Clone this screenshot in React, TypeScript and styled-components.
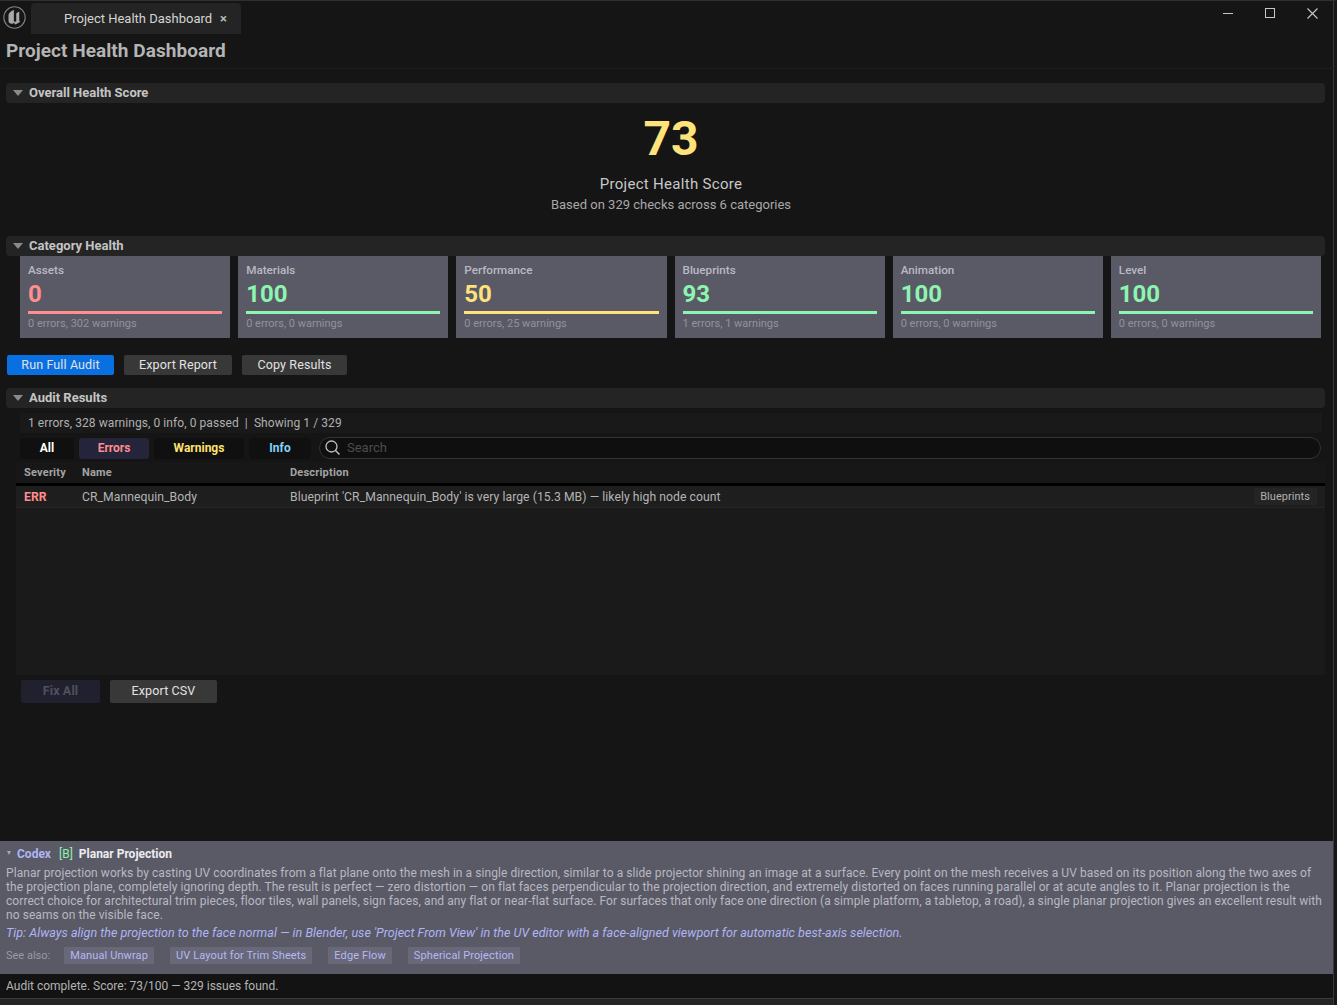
import React from 'react';
import styled, { createGlobalStyle } from 'styled-components';

const GlobalStyle = createGlobalStyle`
  html, body {
    margin: 0;
    padding: 0;
    background: #151515;
  }
  * {
    box-sizing: border-box;
  }
`;

const Window = styled.div`
  position: relative;
  width: 1337px;
  height: 1005px;
  display: flex;
  flex-direction: column;
  overflow: hidden;
  background: #151515;
  border-top: 1px solid #303030;
  border-right: 3px solid #161616;
  box-shadow: inset -1px 0 0 #383838;
  font-family: Roboto, "Liberation Sans", sans-serif;
  color: #c0c0c0;
`;

const ResizeGrip = styled.div`
  position: absolute;
  top: 613px;
  right: -3px;
  width: 1px;
  height: 10px;
  background: #8a8a8a;
`;

const TitleBar = styled.div`
  height: 33px;
  flex: none;
  display: flex;
  align-items: flex-end;
  padding-left: 3px;
`;

const Logo = styled.svg`
  width: 23px;
  height: 23px;
  margin: 0 5px 5px 0;
`;

const Tab = styled.div`
  width: 210px;
  height: 31px;
  background: #242424;
  border-radius: 4px 4px 0 0;
  display: flex;
  align-items: center;
  padding-left: 33px;
  font-size: 13px;
  color: #d4d4d4;
`;

const TabClose = styled.span`
  margin-left: 8px;
  font-size: 13px;
  font-weight: 700;
  color: #b8b8b8;
`;

const WindowButtons = styled.div`
  margin-left: auto;
  align-self: flex-start;
  display: flex;
  align-items: center;
  gap: 32px;
  padding: 6px 16px 0 0;
`;

const PageTitle = styled.div`
  height: 35px;
  flex: none;
  padding: 6px 6px 0;
  font-size: 19px;
  line-height: 22px;
  letter-spacing: 0.05px;
  font-weight: 700;
  color: #b4b4b4;
  border-bottom: 1px solid #1e1e1e;
`;

const SectionHeader = styled.div<{ $top: number }>`
  height: 20px;
  flex: none;
  margin: ${p => p.$top}px 9px 0 6px;
  padding: 0 0 2px 7px;
  background: #242424;
  border-radius: 4px;
  display: flex;
  align-items: center;
  gap: 6px;
  font-size: 13px;
  font-weight: 700;
  color: #c4c4c4;
`;

const Caret = styled.span`
  width: 0;
  height: 0;
  margin-top: 2px;
  border-left: 5px solid transparent;
  border-right: 5px solid transparent;
  border-top: 6px solid #8a8a8a;
`;

const ScoreBlock = styled.div`
  height: 133px;
  flex: none;
  display: flex;
  flex-direction: column;
  align-items: center;
  padding: 8px 0 0 8px;
`;

const ScoreValue = styled.div`
  font-size: 48px;
  line-height: 56px;
  font-weight: 700;
  color: #ffe27a;
`;

const ScoreLabel = styled.div`
  margin-top: 8px;
  font-size: 15px;
  line-height: 18px;
  letter-spacing: 0.3px;
  color: #c8c8c8;
`;

const ScoreSub = styled.div`
  margin-top: 4px;
  font-size: 13px;
  line-height: 16px;
  color: #a8a8a8;
`;

const CardRow = styled.div`
  height: 82px;
  flex: none;
  margin: 0 13px 0 20px;
  display: grid;
  grid-template-columns: repeat(6, 1fr);
  gap: 8px;
`;

const Card = styled.div`
  background: #5a5a66;
  padding: 7px 8px 0;
  display: flex;
  flex-direction: column;
`;

const CardName = styled.div`
  font-size: 11.7px;
  line-height: 14px;
  font-weight: 500;
  color: #b9b9c4;
`;

const CardScore = styled.div<{ $color: string }>`
  margin-top: 3px;
  font-size: 24px;
  line-height: 28px;
  font-weight: 700;
  color: ${p => p.$color};
`;

const CardBar = styled.div<{ $color: string }>`
  height: 3px;
  margin-top: 3px;
  background: ${p => p.$color};
`;

const CardNote = styled.div`
  margin-top: 3px;
  font-size: 11px;
  line-height: 13px;
  color: #92929c;
`;

const ButtonRow = styled.div<{ $top: number; $left: number }>`
  flex: none;
  display: flex;
  gap: 10px;
  margin: ${p => p.$top}px 0 0 ${p => p.$left}px;
`;

const Button = styled.div<{ $variant?: 'primary' | 'disabled'; $width: number; $tall?: boolean }>`
  height: ${p => p.$tall ? 23 : 20}px;
  width: ${p => p.$width}px;
  padding-bottom: 2px;
  border-radius: 2px;
  display: flex;
  align-items: center;
  justify-content: center;
  font-size: 12.5px;
  letter-spacing: 0.12px;
  color: ${p => p.$variant === 'disabled' ? '#50505e' : '#e2e2e2'};
  font-weight: ${p => p.$variant === 'disabled' ? 700 : 400};
  background: ${p => p.$variant === 'primary' ? '#0870e0' : p.$variant === 'disabled' ? '#20202e' : '#383838'};
`;

const StatsLine = styled.div`
  height: 20px;
  flex: none;
  margin: 5px 12px 0 20px;
  padding: 0 0 1px 8px;
  background: #191919;
  display: flex;
  align-items: center;
  font-size: 12px;
  letter-spacing: 0.07px;
  color: #b0b0b0;
  white-space: pre;
`;

const FilterRow = styled.div`
  height: 22px;
  flex: none;
  margin: 4px 13px 0 20px;
  display: flex;
  align-items: center;
`;

const FilterChip = styled.div<{ $width: number; $color: string; $active?: boolean }>`
  width: ${p => p.$width}px;
  height: 21px;
  margin-right: 5px;
  border-radius: 3px;
  background: ${p => p.$active ? '#24243a' : '#101010'};
  color: ${p => p.$color};
  display: flex;
  align-items: center;
  justify-content: center;
  font-size: 12px;
  font-weight: 700;
`;

const SearchBox = styled.div`
  flex: 1;
  height: 22px;
  margin-left: 3px;
  padding: 0 0 1px 4px;
  border: 1px solid #333;
  border-radius: 11px;
  background: #0f0f0f;
  display: flex;
  align-items: center;
  gap: 6px;
  font-size: 13px;
  color: #4c4c4c;
`;

const Table = styled.div`
  height: 213px;
  flex: none;
  margin: 3px 9px 0 16px;
  background: #1a1a1a;
  display: flex;
  flex-direction: column;
`;

const TableHead = styled.div`
  height: 24px;
  flex: none;
  background: #171717;
  border-bottom: 3px solid #000;
  display: grid;
  grid-template-columns: 58px 208px 1fr;
  align-items: center;
  padding-left: 8px;
  font-size: 11px;
  letter-spacing: 0.2px;
  font-weight: 700;
  color: #a4a4a4;
`;

const TableRow = styled.div`
  height: 22px;
  flex: none;
  background: #1e1e1e;
  border-bottom: 1px solid #242424;
  display: grid;
  grid-template-columns: 58px 208px 1fr auto;
  align-items: center;
  padding: 0 8px;
  font-size: 12.2px;
  letter-spacing: 0.05px;
  color: #b4b4b4;
`;

const Severity = styled.span`
  font-weight: 700;
  color: #ff8d8d;
`;

const CategoryTag = styled.span`
  height: 17px;
  padding: 0 7px 0 6px;
  background: #242424;
  display: flex;
  align-items: center;
  font-size: 11px;
  color: #b0b0b0;
`;

const Spacer = styled.div`
  flex: 1;
`;

const Codex = styled.div`
  height: 133px;
  flex: none;
  margin-right: 1px;
  background: #5a5a66;
  padding: 4px 9px 0 6px;
`;

const CodexTitle = styled.div`
  display: flex;
  align-items: center;
  height: 17px;
  font-size: 12px;
  font-weight: 700;
`;

const CodexCaret = styled.span`
  width: 0;
  height: 0;
  margin: 0 6px 2px 1px;
  border-left: 2.5px solid transparent;
  border-right: 2.5px solid transparent;
  border-top: 4px solid #a8a8b4;
`;

const CodexName = styled.span`
  color: #b0b4f4;
  margin-right: 8px;
`;

const CodexLevel = styled.span`
  color: #8cf0ac;
  font-weight: 400;
  margin-right: 6px;
`;

const CodexHeading = styled.span`
  color: #ececf0;
`;

const CodexBody = styled.div`
  margin-top: 4px;
  font-size: 12px;
  line-height: 14px;
  letter-spacing: 0.07px;
  color: #b8b8c2;
`;

const CodexTip = styled.div`
  margin-top: 4px;
  font-size: 12.5px;
  line-height: 14px;
  letter-spacing: 0.03px;
  font-style: italic;
  color: #b0b4f4;
`;

const SeeAlso = styled.div`
  margin-top: 7px;
  display: flex;
  align-items: center;
  height: 17px;
  font-size: 11px;
  color: #9898a4;
`;

const SeeAlsoLabel = styled.span`
  margin-right: 14px;
`;

const SeeAlsoLink = styled.span`
  height: 17px;
  padding: 0 6px;
  margin-right: 16px;
  background: #686878;
  display: flex;
  align-items: center;
  color: #b4b8f4;
  letter-spacing: 0.12px;
`;

const StatusBar = styled.div`
  height: 25px;
  flex: none;
  margin-right: 1px;
  padding-left: 6px;
  background: #131313;
  border-bottom: 1px solid #3a3a3a;
  display: flex;
  align-items: center;
  font-size: 12px;
  color: #b4b4b4;
`;

const BottomEdge = styled.div`
  height: 6px;
  flex: none;
  margin-right: 1px;
  background: #242424;
`;

const categories = [
  { name: 'Assets', score: 0, note: '0 errors, 302 warnings', color: '#ff8f8f' },
  { name: 'Materials', score: 100, note: '0 errors, 0 warnings', color: '#8cf5b0' },
  { name: 'Performance', score: 50, note: '0 errors, 25 warnings', color: '#ffe27a' },
  { name: 'Blueprints', score: 93, note: '1 errors, 1 warnings', color: '#8cf5b0' },
  { name: 'Animation', score: 100, note: '0 errors, 0 warnings', color: '#8cf5b0' },
  { name: 'Level', score: 100, note: '0 errors, 0 warnings', color: '#8cf5b0' },
];

const filters = [
  { label: 'All', width: 54, color: '#ffffff' },
  { label: 'Errors', width: 70, color: '#ff8d8d', active: true },
  { label: 'Warnings', width: 90, color: '#ffe070' },
  { label: 'Info', width: 62, color: '#80d4f8' },
];

const links = ['Manual Unwrap', 'UV Layout for Trim Sheets', 'Edge Flow', 'Spherical Projection'];

const App: React.FC = () => (
  <Window>
    <GlobalStyle />
    <ResizeGrip />
    <TitleBar>
      <Logo viewBox="0 0 23 23">
        <circle cx="11.5" cy="11.5" r="10.7" fill="#161616" stroke="#808080" strokeWidth="1.1" />
        <g transform="translate(11.5 11.5) scale(1.25) translate(-10.8 -11)">
          <path
            d="M9.6 5.2C7.6 6 6 7.6 6 9.4v4.2c0 1.3 1 2.4 2.4 2.4 1 0 1.8-.5 2.3-1.3v1.2l.9.6 3.9-2.2c-.5-.2-.9-.6-.9-1.2V6.2c-.7.3-1.5.8-2.4 1.6v6.1l-.9.5-1-.5V6.6c0-.6.1-1 .3-1.4z"
            fill="#a8a8a8"
          />
        </g>
      </Logo>
      <Tab>
        Project Health Dashboard
        <TabClose>×</TabClose>
      </Tab>
      <WindowButtons>
        <svg width="10" height="12" viewBox="0 0 10 12">
          <path d="M0 6.5h10" stroke="#c8c8c8" strokeWidth="1" />
        </svg>
        <svg width="10" height="10" viewBox="0 0 10 10">
          <rect x=".5" y=".5" width="9" height="9" fill="none" stroke="#c8c8c8" />
        </svg>
        <svg width="11" height="11" viewBox="0 0 11 11">
          <path d="M.5.5l10 10M10.5.5l-10 10" stroke="#c8c8c8" strokeWidth="1.1" />
        </svg>
      </WindowButtons>
    </TitleBar>
    <PageTitle>Project Health Dashboard</PageTitle>

    <SectionHeader $top={14}>
      <Caret />
      Overall Health Score
    </SectionHeader>
    <ScoreBlock>
      <ScoreValue>73</ScoreValue>
      <ScoreLabel>Project Health Score</ScoreLabel>
      <ScoreSub>Based on 329 checks across 6 categories</ScoreSub>
    </ScoreBlock>

    <SectionHeader $top={0}>
      <Caret />
      Category Health
    </SectionHeader>
    <CardRow>
      {categories.map(c => (
        <Card key={c.name}>
          <CardName>{c.name}</CardName>
          <CardScore $color={c.color}>{c.score}</CardScore>
          <CardBar $color={c.color} />
          <CardNote>{c.note}</CardNote>
        </Card>
      ))}
    </CardRow>

    <ButtonRow $top={17} $left={7}>
      <Button $variant="primary" $width={107}>Run Full Audit</Button>
      <Button $width={108}>Export Report</Button>
      <Button $width={105}>Copy Results</Button>
    </ButtonRow>

    <SectionHeader $top={13}>
      <Caret />
      Audit Results
    </SectionHeader>
    <StatsLine>1 errors, 328 warnings, 0 info, 0 passed  |  Showing 1 / 329</StatsLine>
    <FilterRow>
      {filters.map(f => (
        <FilterChip key={f.label} $width={f.width} $color={f.color} $active={f.active}>
          {f.label}
        </FilterChip>
      ))}
      <SearchBox>
        <svg width="17" height="17" viewBox="0 0 17 17">
          <circle cx="7.5" cy="7.5" r="5.5" fill="none" stroke="#c0c0c0" strokeWidth="1.3" />
          <path d="M11.5 11.5l4 4" stroke="#c0c0c0" strokeWidth="1.5" />
        </svg>
        Search
      </SearchBox>
    </FilterRow>
    <Table>
      <TableHead>
        <span>Severity</span>
        <span>Name</span>
        <span>Description</span>
      </TableHead>
      <TableRow>
        <Severity>ERR</Severity>
        <span>CR_Mannequin_Body</span>
        <span>Blueprint 'CR_Mannequin_Body' is very large (15.3 MB) — likely high node count</span>
        <CategoryTag>Blueprints</CategoryTag>
      </TableRow>
    </Table>
    <ButtonRow $top={5} $left={21}>
      <Button $variant="disabled" $width={79} $tall>Fix All</Button>
      <Button $width={107} $tall>Export CSV</Button>
    </ButtonRow>

    <Spacer />

    <Codex>
      <CodexTitle>
        <CodexCaret />
        <CodexName>Codex</CodexName>
        <CodexLevel>[B]</CodexLevel>
        <CodexHeading>Planar Projection</CodexHeading>
      </CodexTitle>
      <CodexBody>
        Planar projection works by casting UV coordinates from a flat plane onto the mesh in a single direction, similar to a slide projector shining an image at a surface. Every point on the mesh receives a UV based on its position along the two axes of the projection plane, completely ignoring depth. The result is perfect — zero distortion — on flat faces perpendicular to the projection direction, and extremely distorted on faces running parallel or at acute angles to it. Planar projection is the correct choice for architectural trim pieces, floor tiles, wall panels, sign faces, and any flat or near-flat surface. For surfaces that only face one direction (a simple platform, a tabletop, a road), a single planar projection gives an excellent result with no seams on the visible face.
      </CodexBody>
      <CodexTip>
        Tip: Always align the projection to the face normal — in Blender, use 'Project From View' in the UV editor with a face-aligned viewport for automatic best-axis selection.
      </CodexTip>
      <SeeAlso>
        <SeeAlsoLabel>See also:</SeeAlsoLabel>
        {links.map(l => (
          <SeeAlsoLink key={l}>{l}</SeeAlsoLink>
        ))}
      </SeeAlso>
    </Codex>
    <StatusBar>Audit complete. Score: 73/100 — 329 issues found.</StatusBar>
    <BottomEdge />
  </Window>
);

export default App;
